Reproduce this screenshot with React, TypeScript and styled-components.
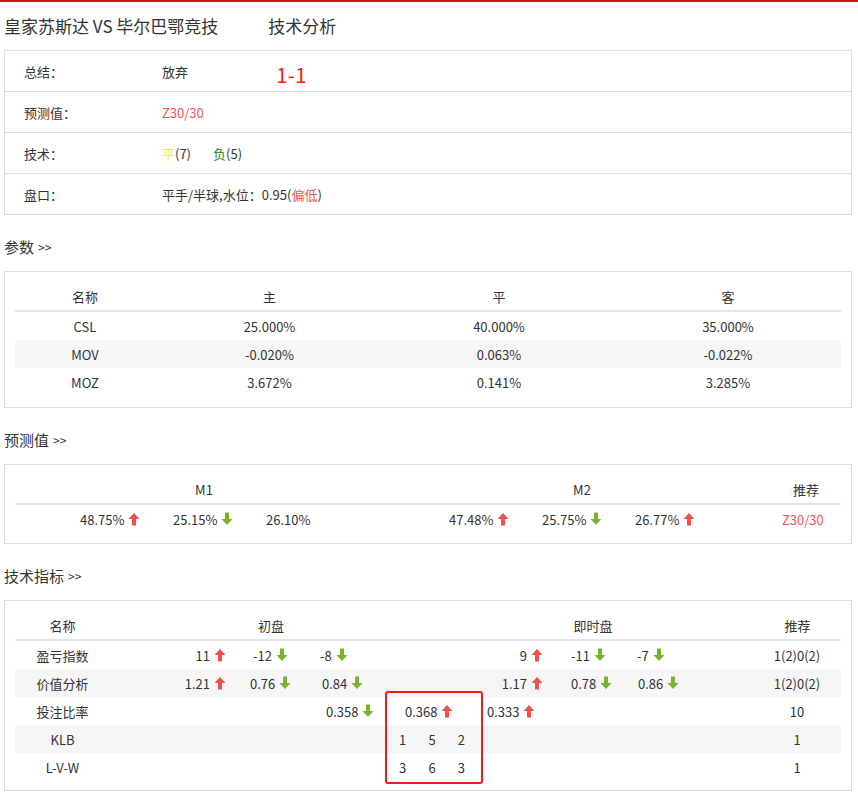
import React from "react";
import styled, { createGlobalStyle } from "styled-components";

const G = createGlobalStyle`
  body { margin: 0; background: #fff; font-family: "Microsoft YaHei", "Noto Sans CJK SC", "Noto Sans", sans-serif; font-size: 13px; color: #333; }
`;
const Page = styled.div`border-top: 2px solid #c8161d; padding: 0 6px 0 4px;`;
const Title = styled.div`height: 46px; display: flex; align-items: center; font-size: 17px; color: #333; gap: 50px; padding-bottom: 2px;`;
const Box = styled.div<{ $pad?: string }>`border: 1px solid #ddd; padding: ${p => p.$pad || "0"}; position: relative;`;
const SumRow = styled.div`display: flex; align-items: center; height: 40px; border-top: 1px solid #ddd; &:first-child { border-top: none; }`;
const SumLabel = styled.div`width: 138px; padding-left: 19px;`;
const SumVal = styled.div`display: flex; align-items: center;`;
const Red = styled.span`color: #ef5350;`;
const Big = styled.span`color: #ff1a1a; font-size: 21px; margin-left: 88px; margin-top: 6px;`;
const Heading = styled.div`height: 56px; display: flex; align-items: center; font-size: 15px; padding-top: 6px; box-sizing: border-box; span { font-size: 12px; margin-left: 4px; }`;
const Row = styled.div<{ $cols: string; $head?: boolean; $alt?: boolean }>`
  display: grid; grid-template-columns: ${p => p.$cols}; height: ${p => (p.$head ? 27 : 28)}px; align-items: center;
  ${p => (p.$head ? "border-bottom: 2px solid #e5e5e5;" : "")}
  background: ${p => (p.$alt ? "#f6f6f6" : "transparent")};
`;
const Cell = styled.div<{ $a?: string; $p?: string }>`text-align: ${p => p.$a || "center"}; padding: ${p => p.$p || "0"}; white-space: nowrap; display: flex; align-items: center; justify-content: ${p => (p.$a === "right" ? "flex-end" : p.$a === "left" ? "flex-start" : "center")};`;
const Hl = styled.div`position: absolute; left: 370px; top: 79px; width: 94px; height: 89px; border: 2px solid #f21b1b; border-radius: 3px;`;
const Trio = styled.div`display: flex; justify-content: space-between; padding: 0 18px 0 14px; width: 100%; box-sizing: border-box;`;
const Inner = styled.div`position: relative;`;

const Up = () => (
  <svg width="12" height="14" viewBox="0 0 12 14" style={{ marginLeft: 4 }}>
    <polygon points="6,1 11.5,7 8,7 8,13.5 4,13.5 4,7 0.5,7" fill="#ef4f4f" />
  </svg>
);
const Down = () => (
  <svg width="12" height="14" viewBox="0 0 12 14" style={{ marginLeft: 4 }}>
    <polygon points="6,13 11.5,7 8,7 8,0.5 4,0.5 4,7 0.5,7" fill="#7ab32e" />
  </svg>
);

const PC = "140px 229px 230px 228px";
const MC = "65px 93px 93px 183px 93px 93px 147px 1fr";
const TC = "95px 122px 73px 80px 98px 65px 72px 132px 90px";

export default function App() {
  return (
    <Page>
      <G />
      <Title><span>皇家苏斯达 VS 毕尔巴鄂竞技</span><span>技术分析</span></Title>
      <Box>
        <SumRow><SumLabel>总结：</SumLabel><SumVal>放弃<Big>1-1</Big></SumVal></SumRow>
        <SumRow><SumLabel>预测值：</SumLabel><SumVal><Red>Z30/30</Red></SumVal></SumRow>
        <SumRow><SumLabel>技术：</SumLabel><SumVal><span style={{ color: "#f5f500" }}>平</span>(7)<span style={{ color: "#1a8a1a", marginLeft: 22 }}>负</span>(5)</SumVal></SumRow>
        <SumRow><SumLabel>盘口：</SumLabel><SumVal>平手/半球,水位：0.95(<Red>偏低</Red>)</SumVal></SumRow>
      </Box>
      <Heading>参数<span>&gt;&gt;</span></Heading>
      <Box $pad="11px 10px 11px 10px">
        <Row $cols={PC} $head><Cell>名称</Cell><Cell>主</Cell><Cell>平</Cell><Cell>客</Cell></Row>
        <Row $cols={PC}><Cell>CSL</Cell><Cell>25.000%</Cell><Cell>40.000%</Cell><Cell>35.000%</Cell></Row>
        <Row $cols={PC} $alt><Cell>MOV</Cell><Cell>-0.020%</Cell><Cell>0.063%</Cell><Cell>-0.022%</Cell></Row>
        <Row $cols={PC}><Cell>MOZ</Cell><Cell>3.672%</Cell><Cell>0.141%</Cell><Cell>3.285%</Cell></Row>
      </Box>
      <Heading>预测值<span>&gt;&gt;</span></Heading>
      <Box $pad="11px 10px 10px 10px">
        <Row $cols="378px 378px 1fr" $head><Cell>M1</Cell><Cell>M2</Cell><Cell>推荐</Cell></Row>
        <Row $cols={MC}>
          <Cell />
          <Cell $a="left">48.75%<Up /></Cell><Cell $a="left">25.15%<Down /></Cell><Cell $a="left">26.10%</Cell>
          <Cell $a="left">47.48%<Up /></Cell><Cell $a="left">25.75%<Down /></Cell><Cell $a="left">26.77%<Up /></Cell>
          <Cell $a="left"><Red>Z30/30</Red></Cell>
        </Row>
      </Box>
      <Heading>技术指标<span>&gt;&gt;</span></Heading>
      <Box $pad="11px 10px 9px 10px">
        <Inner>
          <Row $cols="95px 322px 322px 1fr" $head><Cell>名称</Cell><Cell>初盘</Cell><Cell>即时盘</Cell><Cell>推荐</Cell></Row>
          <Row $cols={TC}>
            <Cell>盈亏指数</Cell><Cell $a="right" $p="0 6px 0 0">11<Up /></Cell><Cell $a="left" $p="0 0 0 21px">-12<Down /></Cell><Cell $a="left" $p="0 0 0 15px">-8<Down /></Cell><Cell />
            <Cell $a="right" $p="0 5px 0 0">9<Up /></Cell><Cell $a="left" $p="0 0 0 23px">-11<Down /></Cell><Cell $a="left" $p="0 0 0 17px">-7<Down /></Cell><Cell>1(2)0(2)</Cell>
          </Row>
          <Row $cols={TC} $alt>
            <Cell>价值分析</Cell><Cell $a="right" $p="0 6px 0 0">1.21<Up /></Cell><Cell $a="left" $p="0 0 0 18px">0.76<Down /></Cell><Cell $a="left" $p="0 0 0 17px">0.84<Down /></Cell><Cell />
            <Cell $a="right" $p="0 5px 0 0">1.17<Up /></Cell><Cell $a="left" $p="0 0 0 23px">0.78<Down /></Cell><Cell $a="left" $p="0 0 0 18px">0.86<Down /></Cell><Cell>1(2)0(2)</Cell>
          </Row>
          <Row $cols={TC}>
            <Cell>投注比率</Cell><Cell /><Cell /><Cell $a="left" $p="0 0 0 21px">0.358<Down /></Cell>
            <Cell $a="left" $p="0 0 0 20px">0.368<Up /></Cell><Cell $a="left" $p="0 0 0 4px">0.333<Up /></Cell><Cell /><Cell /><Cell>10</Cell>
          </Row>
          <Row $cols={TC} $alt>
            <Cell>KLB</Cell><Cell /><Cell /><Cell /><Cell><Trio><span>1</span><span>5</span><span>2</span></Trio></Cell><Cell /><Cell /><Cell /><Cell>1</Cell>
          </Row>
          <Row $cols={TC}>
            <Cell>L-V-W</Cell><Cell /><Cell /><Cell /><Cell><Trio><span>3</span><span>6</span><span>3</span></Trio></Cell><Cell /><Cell /><Cell /><Cell>1</Cell>
          </Row>
          <Hl />
        </Inner>
      </Box>
    </Page>
  );
}
